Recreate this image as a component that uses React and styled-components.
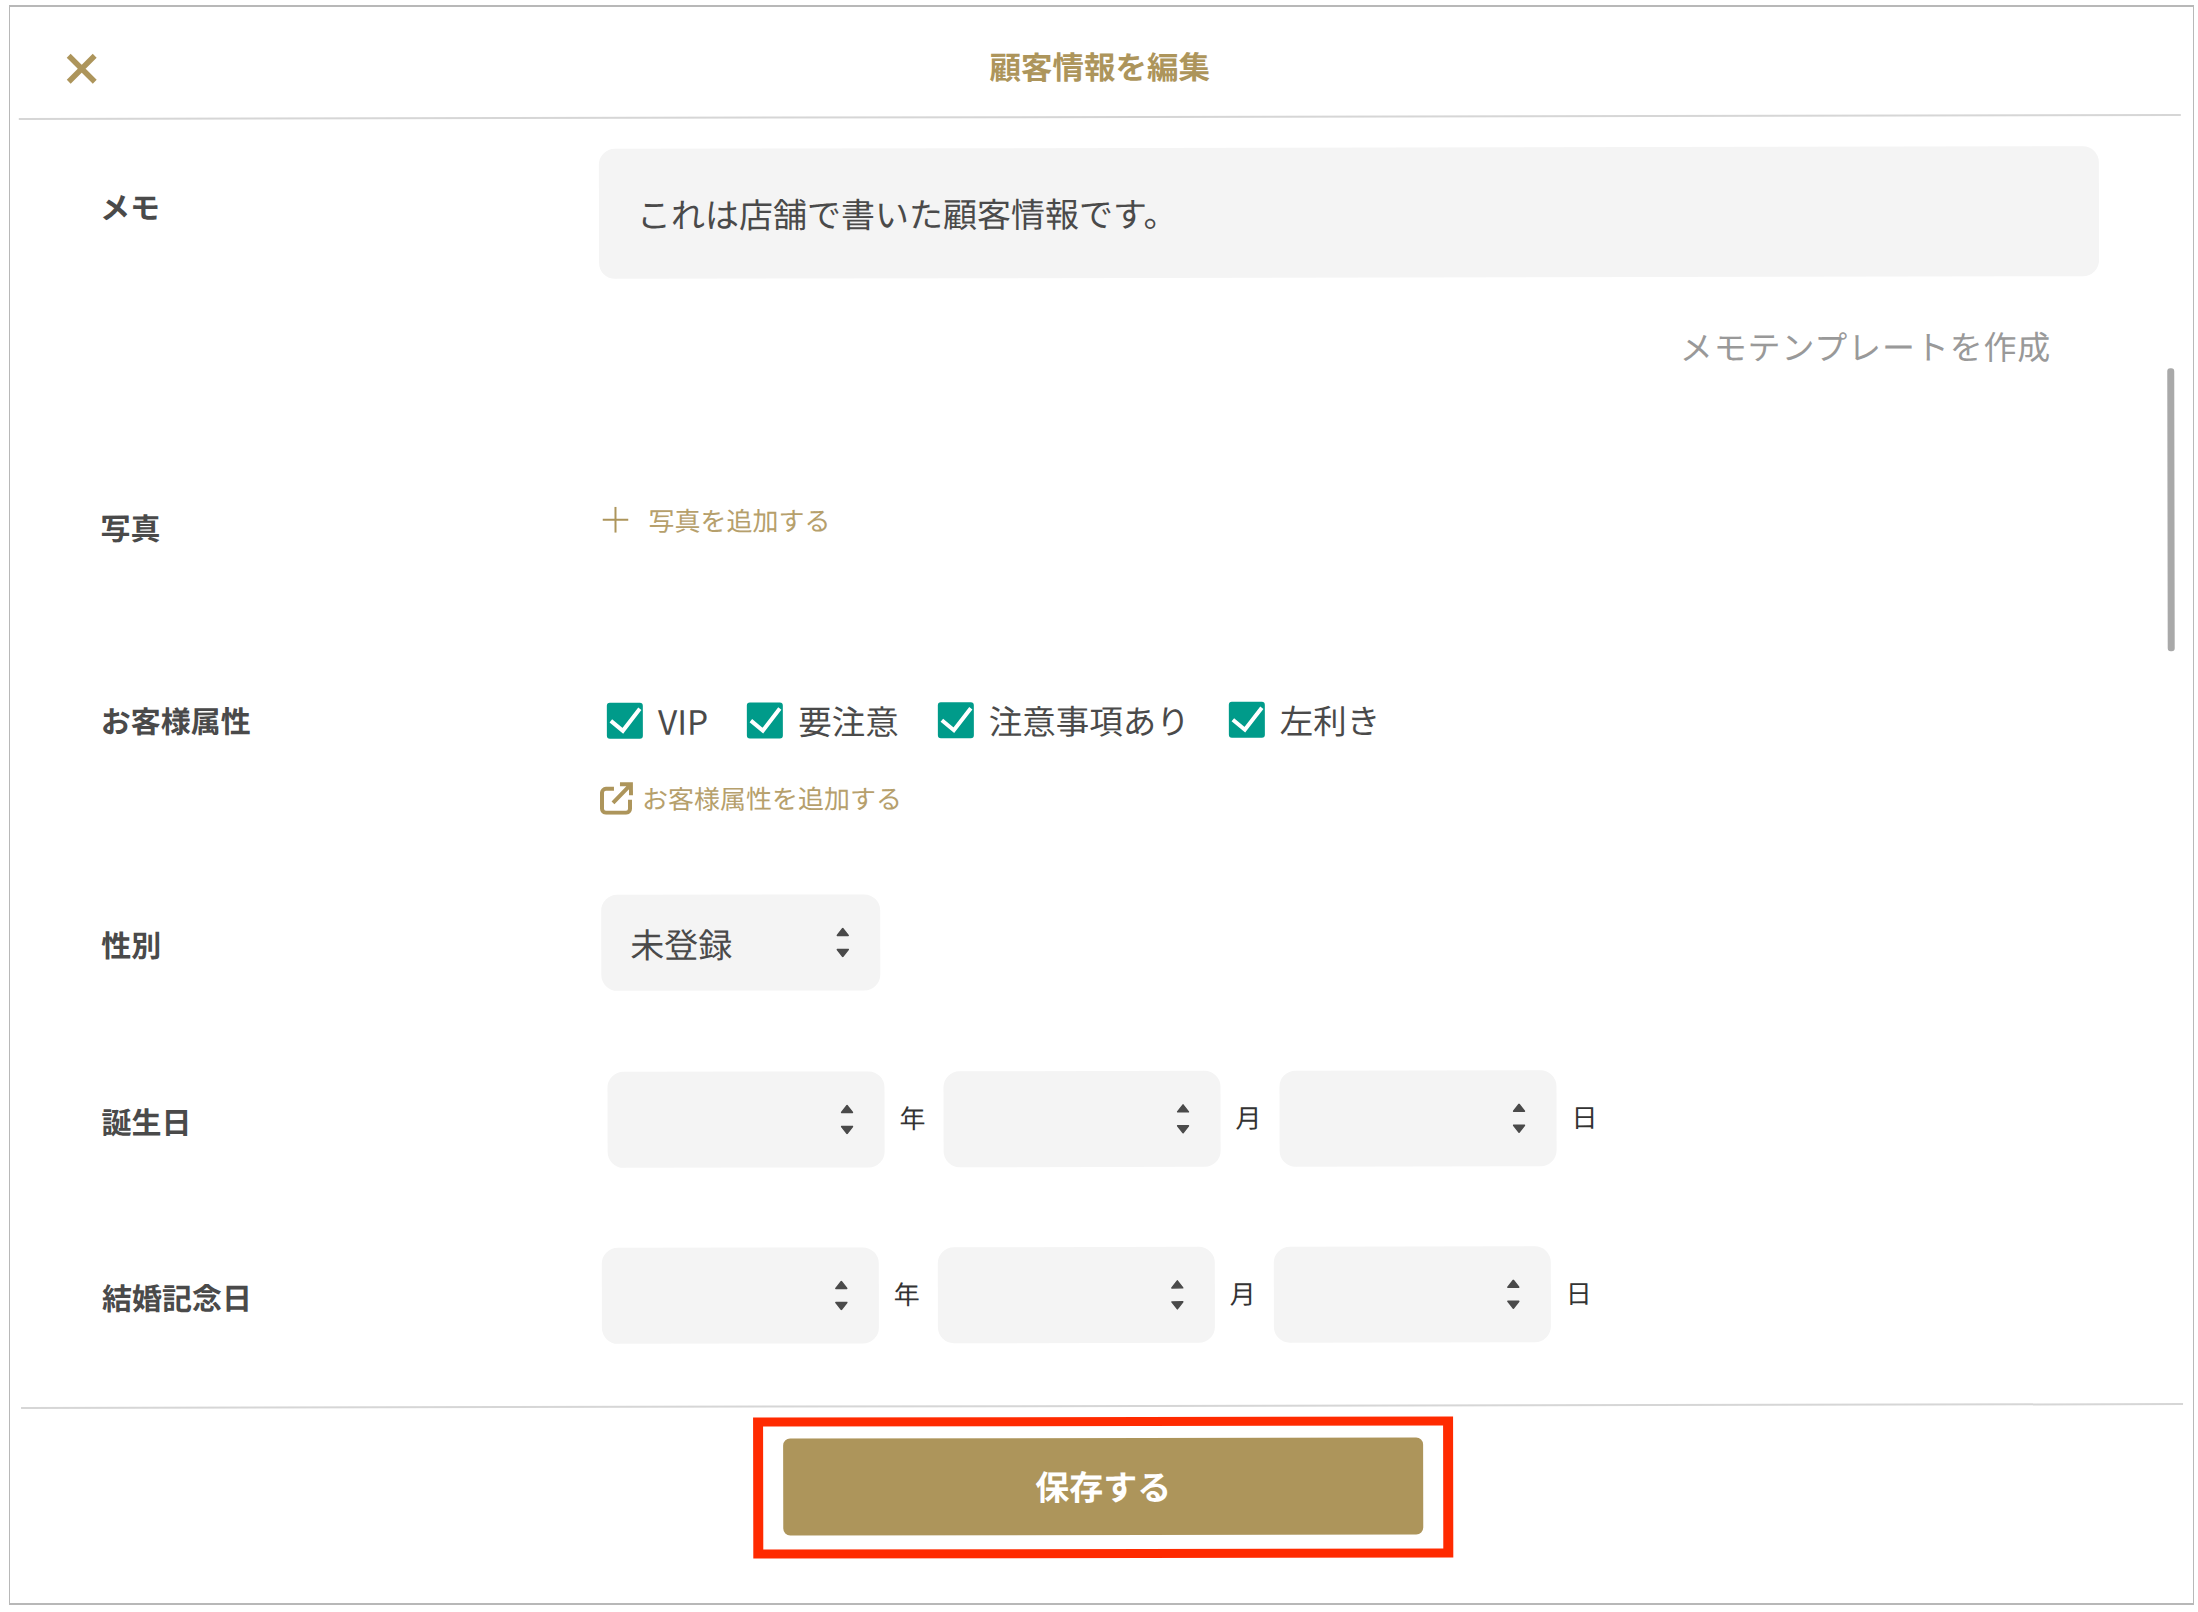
import React from "react";
import styled, { createGlobalStyle } from "styled-components";

const GOLD = "#ad955b";
const TEXT = "#4a4a4a";

const GlobalStyle = createGlobalStyle`
  html, body {
    margin: 0;
    padding: 0;
    background: #fff;
  }
  body {
    font-family: "Noto Sans CJK JP", "Noto Sans", sans-serif;
    color: ${TEXT};
  }
`;

const Frame = styled.div`
  box-sizing: border-box;
  width: 2185px;
  height: 1600px;
  margin: 5px 0 0 9px;
  border: 1px solid #b8b8b8;
  border-width: 2px 1px;
  display: flex;
  flex-direction: column;
`;

const Sheet = styled.div`
  flex: 1;
  margin: 0 11px 0 10px;
  display: flex;
  flex-direction: column;
  transform: rotate(-0.1deg);
`;

const Header = styled.header`
  position: relative;
  height: 109px;
  flex: none;
  display: flex;
  align-items: center;
  justify-content: center;
  border-bottom: 2px solid #d6d6d6;
  box-sizing: content-box;
`;

const CloseButton = styled.button`
  position: absolute;
  left: 47px;
  top: 44px;
  width: 32px;
  height: 32px;
  padding: 0;
  border: 0;
  background: none;
  display: flex;
`;

const Title = styled.h1`
  margin: 7px 0 0;
  font-size: 31.500px;
  line-height: 44px;
  font-weight: 700;
  color: ${GOLD};
`;

const Body = styled.main`
  position: relative;
  flex: 1;
  padding-top: 30px;
`;

const Scrollbar = styled.div`
  position: absolute;
  right: 7px;
  top: 252px;
  width: 7px;
  height: 283px;
  border-radius: 3px;
  background: #a9a9a9;
`;

const Row = styled.section`
  display: flex;
  align-items: flex-start;
  padding-left: 81px;
  margin-top: ${(p) => p.$top || 0}px;
`;

const Label = styled.div`
  flex: none;
  width: 499px;
  margin-top: ${(p) => p.$offset || 0}px;
  font-size: 30px;
  line-height: 40px;
  font-weight: 700;
  color: ${TEXT};
`;

const Field = styled.div`
  flex: 1;
  min-width: 0;
  display: flex;
  flex-direction: column;
  align-items: flex-start;
  padding-left: ${(p) => p.$indent || 0}px;
`;

const MemoBox = styled.div`
  box-sizing: border-box;
  width: 1500px;
  height: 130px;
  padding: 42px 38px 0;
  border-radius: 16px;
  background: #f4f4f4;
  font-size: 34px;
  line-height: 46px;
  color: ${TEXT};
`;

const TemplateLink = styled.a`
  display: block;
  height: 44px;
  margin-top: 47px;
  padding-right: 130px;
  text-align: right;
  font-size: 33px;
  line-height: 44px;
  letter-spacing: 0.85px;
  color: #999;
`;

const AddLink = styled.a`
  display: flex;
  align-items: center;
  gap: ${(p) => p.$gap}px;
  height: 40px;
  font-size: 26px;
  line-height: 40px;
  color: #b6a06c;
`;

const Checks = styled.div`
  display: flex;
  align-items: center;
  gap: 39px;
  height: 40px;
  padding-left: 7px;
  margin-bottom: 37px;
`;

const CheckItem = styled.label`
  display: flex;
  align-items: center;
  gap: 15px;
  font-size: 33.500px;
  line-height: 40px;
  color: ${TEXT};
`;

const CheckMark = styled.span`
  width: 36px;
  height: 36px;
  flex: none;
  border-radius: 3px;
  background: #009b8a;
  display: flex;
`;

const SelectBox = styled.div`
  box-sizing: border-box;
  width: ${(p) => p.$width}px;
  height: 96px;
  flex: none;
  display: flex;
  align-items: center;
  justify-content: space-between;
  padding: 0 31px 0 29px;
  border-radius: 16px;
  background: #f4f4f4;
  font-size: 34px;
  color: ${TEXT};
`;

const DateRow = styled.div`
  display: flex;
  align-items: center;
`;

const Unit = styled.span`
  width: 26px;
  margin: -4px 18px 0 15px;
  font-size: 26px;
  line-height: 40px;
  color: #333;
`;

const Footer = styled.footer`
  flex: none;
  height: 198px;
  box-sizing: border-box;
  border-top: 2px solid #d6d6d6;
  display: flex;
  justify-content: center;
  align-items: flex-start;
  padding: 10px 0 0 2px;
`;

const Highlight = styled.div`
  box-sizing: border-box;
  width: 700px;
  height: 141px;
  padding: 12px 20px 0 20px;
  border: 10px solid #ff2a00;
  border-width: 9px 10px;
`;

const SaveButton = styled.button`
  width: 640px;
  height: 97px;
  padding: 0 0 3px;
  border: 0;
  border-radius: 7px;
  background: ${GOLD};
  color: #fff;
  font-family: inherit;
  font-size: 34px;
  font-weight: 700;
`;

const CloseIcon = () => (
  <svg width="32" height="32" viewBox="0 0 32 32" fill="none" stroke={GOLD} strokeWidth="5.500">
    <path d="M3 3l26 26M29 3L3 29" />
  </svg>
);

const PlusIcon = () => (
  <svg width="26" height="26" viewBox="0 0 26 26" stroke={GOLD} strokeWidth="2">
    <path d="M13 0v26M0 13h26" />
  </svg>
);

const ExternalIcon = () => (
  <svg width="33" height="33" viewBox="0 0 33 33" fill="none" stroke={GOLD} strokeWidth="4">
    <path d="M14 7H6a4 4 0 0 0-4 4v16a4 4 0 0 0 4 4h20a4 4 0 0 0 4-4v-9" />
    <path d="M13 21L30 3.500M20 2.500h11v11" />
  </svg>
);

const CheckIcon = () => (
  <svg width="36" height="36" viewBox="0 0 36 36" fill="none" stroke="#fff" strokeWidth="4">
    <path d="M4 18l12 10L33 6" />
  </svg>
);

const Stepper = () => (
  <svg width="13" height="30" viewBox="0 0 13 30" fill={TEXT} stroke={TEXT} strokeWidth="1.500" strokeLinejoin="round">
    <path d="M6.500 1l5.500 7H1zM6.500 29l5.500-7H1z" />
  </svg>
);

const Select = ({ value, width = 277 }) => (
  <SelectBox $width={width}>
    <span>{value}</span>
    <Stepper />
  </SelectBox>
);

const DateFields = () => (
  <DateRow>
    <Select />
    <Unit>年</Unit>
    <Select />
    <Unit>月</Unit>
    <Select />
    <Unit>日</Unit>
  </DateRow>
);

const attributes = ["VIP", "要注意", "注意事項あり", "左利き"];

export default function App() {
  return (
    <>
      <GlobalStyle />
      <Frame>
        <Sheet>
          <Header>
            <CloseButton aria-label="閉じる">
              <CloseIcon />
            </CloseButton>
            <Title>顧客情報を編集</Title>
          </Header>
          <Body>
            <Scrollbar />
            <Row>
              <Label $offset={36}>メモ</Label>
              <Field>
                <MemoBox>これは店舗で書いた顧客情報です。</MemoBox>
              </Field>
            </Row>
            <TemplateLink>メモテンプレートを作成</TemplateLink>
            <Row $top={130}>
              <Label $offset={6}>写真</Label>
              <Field $indent={3}>
                <AddLink $gap={20}>
                  <PlusIcon />
                  写真を追加する
                </AddLink>
              </Field>
            </Row>
            <Row $top={155}>
              <Label $offset={-2}>お客様属性</Label>
              <Field>
                <Checks>
                  {attributes.map((name) => (
                    <CheckItem key={name}>
                      <CheckMark>
                        <CheckIcon />
                      </CheckMark>
                      {name}
                    </CheckItem>
                  ))}
                </Checks>
                <AddLink $gap={9}>
                  <ExternalIcon />
                  お客様属性を追加する
                </AddLink>
              </Field>
            </Row>
            <Row $top={77}>
              <Label $offset={28}>性別</Label>
              <Field $indent={1}>
                <Select value="未登録" width={279} />
              </Field>
            </Row>
            <Row $top={81}>
              <Label $offset={28}>誕生日</Label>
              <Field $indent={7}>
                <DateFields />
              </Field>
            </Row>
            <Row $top={80}>
              <Label $offset={28}>結婚記念日</Label>
              <Field $indent={1}>
                <DateFields />
              </Field>
            </Row>
          </Body>
          <Footer>
            <Highlight>
              <SaveButton>保存する</SaveButton>
            </Highlight>
          </Footer>
        </Sheet>
      </Frame>
    </>
  );
}
